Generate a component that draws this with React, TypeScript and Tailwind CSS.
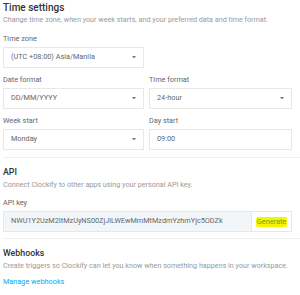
import React from "react";

function Caret() {
  return (
    <svg width="4" height="3" viewBox="0 0 4 3" className="shrink-0">
      <path d="M0 0 L4 0 L2 2.5 Z" fill="#777" />
    </svg>
  );
}

function Select({ value, caret = true }: { value: string; caret?: boolean }) {
  return (
    <div className="h-[21px] border border-[#e8e8e8] bg-white flex items-center justify-between pl-[7px] pr-[7px] text-[7.3px] text-[#666]">
      <span>{value}</span>
      {caret && <Caret />}
    </div>
  );
}

function Label({ children }: { children: React.ReactNode }) {
  return <div className="text-[7.3px] text-[#666] leading-[10px] mb-[3px]">{children}</div>;
}

export default function App() {
  return (
    <div
      className="w-[300px] h-[295px] bg-white overflow-hidden px-[3px] pt-[2px]"
      style={{ fontFamily: "Roboto, 'Liberation Sans', sans-serif" }}
    >
      <div className="text-[10px] font-medium text-[#333] leading-[12px]">Time settings</div>
      <div className="text-[7.2px] text-[#999] leading-[10px] mt-[1px]">
        Change time zone, when your week starts, and your preferred data and time format.
      </div>

      <div className="mt-[9px] w-[141px]">
        <Label>Time zone</Label>
        <Select value="(UTC +08:00) Asia/Manila" />
      </div>

      <div className="grid grid-cols-[141px_143px] gap-x-[5px] mt-[7px]">
        <div>
          <Label>Date format</Label>
          <Select value="DD/MM/YYYY" />
        </div>
        <div>
          <Label>Time format</Label>
          <Select value="24-hour" />
        </div>
      </div>

      <div className="grid grid-cols-[141px_143px] gap-x-[5px] mt-[7px]">
        <div>
          <Label>Week start</Label>
          <Select value="Monday" />
        </div>
        <div>
          <Label>Day start</Label>
          <Select value="09:00" caret={false} />
        </div>
      </div>

      <div className="h-px bg-[#f0f0f0] mt-[7px] mr-[-3px]" />

      <div className="text-[8.8px] font-medium text-[#333] leading-[12px] mt-[8px]">API</div>
      <div className="text-[7.2px] text-[#999] leading-[10px] mt-[2px]">
        Connect Clockify to other apps using your personal API key.
      </div>

      <div className="mt-[8px] w-[289px]">
        <Label>API key</Label>
        <div className="h-[21px] border border-[#e8e8e8] bg-[#f2f6f8] flex items-stretch">
          <div className="flex-1 flex items-center pl-[7px] text-[7.3px] text-[#666]">
            NWU1Y2UzM2ItMzUyNS00ZjJiLWEwMmMtMzdmYzhmYjc5ODZk
          </div>
          <div className="w-[40px] border-l border-[#e8e8e8] bg-white flex items-center justify-center">
            <span className="bg-[#f5f500] text-[#6aa819] text-[7.3px] px-[1px] leading-[10px] rounded-[2px]">
              Generate
            </span>
          </div>
        </div>
      </div>

      <div className="h-px bg-[#f0f0f0] mt-[6px] mr-[-3px]" />

      <div className="text-[8.8px] font-medium text-[#333] leading-[12px] mt-[8px]">Webhooks</div>
      <div className="text-[7.2px] text-[#999] leading-[10px] mt-[2px]">
        Create triggers so Clockify can let you know when something happens in your workspace.
      </div>
      <div className="text-[7.3px] text-[#03a9f4] leading-[10px] mt-[6px]">Manage webhooks</div>
    </div>
  );
}
